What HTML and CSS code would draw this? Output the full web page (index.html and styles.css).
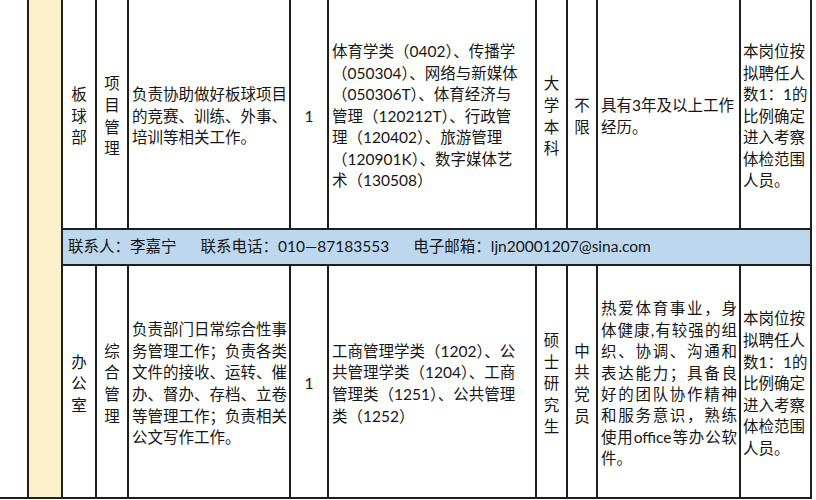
FILE: index.html
```html
<!DOCTYPE html>
<html lang="zh-CN">
<head>
<meta charset="utf-8">
<title>岗位表</title>
<link rel="stylesheet" href="styles.css">
</head>
<body>
<div class="sheet">
  <div class="cell side"></div>
  <div class="cell side yellow"></div>

  <div class="cell center">板<br>球<br>部</div>
  <div class="cell center">项<br>目<br>管<br>理</div>
  <div class="cell text">负责协助做好板球项目<br>的竞赛、训练、外事、<br>培训等相关工作。</div>
  <div class="cell center">1</div>
  <div class="cell text">体育学类（0402）、传播学<br>（050304）、网络与新媒体<br>（050306T）、体育经济与<br>管理（120212T）、行政管<br>理（120402）、旅游管理<br>（120901K）、数字媒体艺<br>术（130508）</div>
  <div class="cell center">大<br>学<br>本<br>科</div>
  <div class="cell center">不<br>限</div>
  <div class="cell text">具有3年及以上工作<br>经历。</div>
  <div class="cell text narrow">本岗位按<br>拟聘任人<br>数1：1的<br>比例确定<br>进入考察<br>体检范围<br>人员。</div>

  <div class="contact">
    <span>联系人：李嘉宁</span>
    <span>联系电话：010—87183553</span>
    <span>电子邮箱：ljn20001207@sina.com</span>
  </div>

  <div class="cell center">办<br>公<br>室</div>
  <div class="cell center">综<br>合<br>管<br>理</div>
  <div class="cell text">负责部门日常综合性事<br>务管理工作；负责各类<br>文件的接收、运转、催<br>办、督办、存档、立卷<br>等管理工作；负责相关<br>公文写作工作。</div>
  <div class="cell center">1</div>
  <div class="cell text">工商管理学类（1202）、公<br>共管理学类（1204）、工商<br>管理类（1251）、公共管理<br>类（1252）</div>
  <div class="cell center">硕<br>士<br>研<br>究<br>生</div>
  <div class="cell center">中<br>共<br>党<br>员</div>
  <div class="cell text">
    <div class="just">
      <span>热爱体育事业，身</span>
      <span>体健康,有较强的组</span>
      <span>织、协调、沟通和</span>
      <span>表达能力；具备良</span>
      <span>好的团队协作精神</span>
      <span>和服务意识，熟练</span>
      <span>使用office等办公软</span>
      <span class="last">件。</span>
    </div>
  </div>
  <div class="cell text narrow">本岗位按<br>拟聘任人<br>数1：1的<br>比例确定<br>进入考察<br>体检范围<br>人员。</div>
</div>
</body>
</html>
```

FILE: styles.css
```css
html, body {
  margin: 0;
  padding: 0;
  background: #ffffff;
}

.sheet {
  display: grid;
  grid-template-columns: 27px 32px 32px 30px 160px 36px 206px 29px 28px 141px 69px;
  grid-template-rows: 228px 34px 231px;
  gap: 2px;
  width: max-content;
  background: #1f1f1f;
  border-right: 2px solid #1f1f1f;
  border-bottom: 2px solid #1f1f1f;
  font-family: Lato, "Noto Sans CJK SC", sans-serif;
  font-size: 15.5px;
  line-height: 21.6px;
  color: #161616;
}

.cell {
  background: #ffffff;
  display: flex;
  align-items: center;
  padding-top: 5px;
  box-sizing: border-box;
}

.side {
  grid-row: 1 / 4;
}

.yellow {
  background: #fdf1cb;
}

.center {
  justify-content: center;
  text-align: center;
}

.text {
  padding-left: 3px;
  white-space: nowrap;
}

.narrow {
  padding-left: 2px;
}

.just {
  flex: 1;
  padding-right: 2px;
  line-height: 21.4px;
}

.just span {
  display: block;
  text-align: justify;
  text-align-last: justify;
}

.just span.last {
  text-align-last: left;
}

.contact {
  grid-column: 3 / 12;
  background: #bdd7ee;
  display: flex;
  align-items: center;
  gap: 24px;
  padding-left: 5px;
  white-space: nowrap;
}
```
